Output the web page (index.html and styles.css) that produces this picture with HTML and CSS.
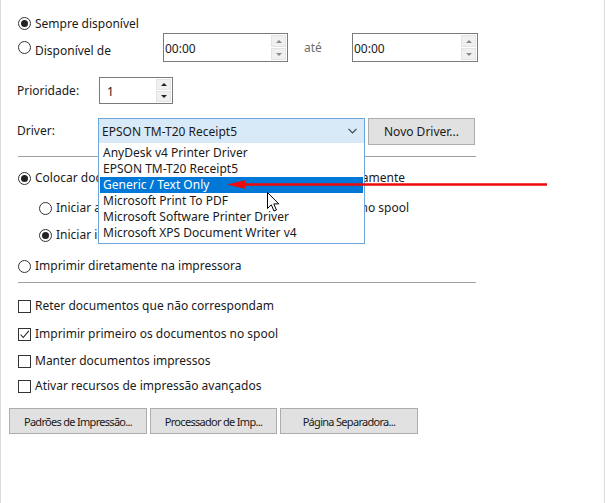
FILE: index.html
```html
<!DOCTYPE html>
<html lang="pt-BR">
<head>
<meta charset="utf-8">
<title>Avançado</title>
<link rel="stylesheet" href="styles.css">
</head>
<body>
<div class="dialog">
  <div class="content">
    <div class="row r1">
      <span class="radio on"></span><span class="lbl">Sempre disponível</span>
    </div>
    <div class="row r2">
      <div class="opt w-disp"><span class="radio"></span><span class="lbl low">Disponível de</span></div>
      <div class="spin time">
        <span class="val">00:00</span>
        <span class="arrows dis"><span class="up"></span><span class="down"></span></span>
      </div>
      <span class="ate">até</span>
      <div class="spin time t2">
        <span class="val">00:00</span>
        <span class="arrows dis"><span class="up"></span><span class="down"></span></span>
      </div>
    </div>
    <div class="row r3">
      <span class="lbl w-label">Prioridade:</span>
      <div class="spin prio">
        <span class="val num">1</span>
        <span class="arrows"><span class="up"></span><span class="down"></span></span>
      </div>
    </div>
    <div class="row r4">
      <span class="lbl w-driver">Driver:</span>
      <div class="combo">
        <span class="combo-val">EPSON TM-T20 Receipt5</span>
        <svg class="chev" width="9" height="6" viewBox="0 0 9 6"><polyline points="0.5,0.8 4.5,4.8 8.5,0.8" fill="none" stroke="#444" stroke-width="1.2"/></svg>
        <ul class="list">
          <li>AnyDesk v4 Printer Driver</li>
          <li>EPSON TM-T20 Receipt5</li>
          <li class="sel">Generic / Text Only</li>
          <li>Microsoft Print To PDF</li>
          <li>Microsoft Software Printer Driver</li>
          <li>Microsoft XPS Document Writer v4</li>
        </ul>
      </div>
      <button class="btn novo">Novo Driver...</button>
    </div>
    <div class="sep s1"></div>
    <div class="row rr r-spool">
      <span class="radio on"></span><span class="lbl">Colocar documentos no spool para se imprimir mais rapidamente</span>
    </div>
    <div class="row rr sub s-a">
      <span class="radio"></span><span class="lbl">Iniciar a impressão após a última página ser colocada no spool</span>
    </div>
    <div class="row rr sub s-b">
      <span class="radio on"></span><span class="lbl">Iniciar impressão imediatamente</span>
    </div>
    <div class="row rr r-direct">
      <span class="radio"></span><span class="lbl">Imprimir diretamente na impressora</span>
    </div>
    <div class="sep s2"></div>
    <div class="row rr c1"><span class="check"></span><span class="lbl">Reter documentos que não correspondam</span></div>
    <div class="row rr c2"><span class="check on"><svg width="11" height="11" viewBox="0 0 11 11"><polyline points="1.5,5.5 4.2,8.5 9.8,1.8" fill="none" stroke="#222" stroke-width="1.1"/></svg></span><span class="lbl">Imprimir primeiro os documentos no spool</span></div>
    <div class="row rr c3"><span class="check"></span><span class="lbl">Manter documentos impressos</span></div>
    <div class="row rr c4"><span class="check"></span><span class="lbl">Ativar recursos de impressão avançados</span></div>
    <div class="row buttons">
      <button class="btn b1">Padrões de Impressão...</button>
      <button class="btn b2">Processador de Imp...</button>
      <button class="btn b3">Página Separadora...</button>
    </div>
  </div>
  <svg class="red-arrow" width="322" height="12" viewBox="0 0 322 12">
    <line x1="16" y1="6.5" x2="320" y2="6.5" stroke="#ee0a0a" stroke-width="2.6"/>
    <polygon points="0,6.5 18,2.3 18,10.7" fill="#ee0a0a"/>
  </svg>
  <svg class="cursor" width="13" height="21" viewBox="0 0 13 21">
    <path d="M0.5,0.5 L0.5,16.5 L4.3,12.8 L7,19 L9.4,18 L6.8,11.9 L11.8,11.9 Z" fill="#fff" stroke="#000" stroke-width="1" stroke-linejoin="round"/>
  </svg>
</div>
</body>
</html>
```

FILE: styles.css
```css
* { box-sizing: border-box; }
html, body { margin: 0; padding: 0; background: #fff; }
body {
  font-family: "Noto Sans", "Open Sans", sans-serif;
  font-size: 12px;
  color: #1a1a1a;
}
.dialog {
  position: relative;
  width: 605px;
  height: 503px;
  border-left: 1px solid #dcdcdc;
  border-right: 1px solid #dcdcdc;
  overflow: hidden;
}
.content {
  display: flex;
  flex-direction: column;
  padding-left: 16px;
}
.row {
  display: flex;
  align-items: center;
  white-space: nowrap;
}
.lbl { line-height: 16px; }
.low { margin-top: 7px; }

.radio {
  width: 13px;
  height: 13px;
  border: 1px solid #333;
  border-radius: 50%;
  margin: 0 4px 0 1px;
  display: inline-flex;
  align-items: center;
  justify-content: center;
  flex: none;
  background: #fff;
}
.radio.on::after {
  content: "";
  width: 7px;
  height: 7px;
  border-radius: 50%;
  background: #222;
}
.check {
  width: 13px;
  height: 13px;
  border: 1px solid #333;
  margin: 0 4px 0 1px;
  flex: none;
  display: inline-flex;
  align-items: center;
  justify-content: center;
  background: #fff;
}

.r1 { margin-top: 14px; height: 19px; }
.r2 { height: 29px; }
.r3 { margin-top: 15px; height: 27px; }
.r4 { margin-top: 14px; height: 26px; }

.opt { display: flex; align-items: center; }
.w-disp { width: 146px; }
.w-label { width: 82px; }
.w-driver { width: 81px; }

.spin {
  display: flex;
  border: 1px solid #7a7a7a;
  background: #fff;
  height: 100%;
  align-items: stretch;
}
.spin .val {
  flex: 1;
  display: flex;
  align-items: center;
  padding-left: 1px;
  padding-top: 1px;
}
.spin .val.num { padding-left: 7px; }
.time { width: 125px; }
.t2 { width: 126px; }
.prio { width: 74px; }
.ate {
  width: 64px;
  padding-left: 16px;
  color: #6e6e6e;
}
.arrows {
  width: 16px;
  display: flex;
  flex-direction: column;
  gap: 1px;
  padding: 1px 1px 1px 0;
}
.arrows span {
  flex: 1;
  background: #f0f0f0;
  border: 1px solid #e3e3e3;
  display: flex;
  align-items: center;
  justify-content: center;
}
.arrows .up::after {
  content: "";
  border-left: 3px solid transparent;
  border-right: 3px solid transparent;
  border-bottom: 3px solid #222;
}
.arrows .down::after {
  content: "";
  border-left: 3px solid transparent;
  border-right: 3px solid transparent;
  border-top: 3px solid #222;
}
.arrows.dis .up::after { border-bottom-color: #8a8a8a; }
.arrows.dis .down::after { border-top-color: #8a8a8a; }

.combo {
  position: relative;
  width: 267px;
  height: 26px;
  border: 1px solid #6ea6dc;
  background: #d8e9f8;
  display: flex;
  align-items: center;
  padding-left: 3px;
}
.combo-val { flex: 1; }
.chev { margin-right: 7px; }
.list {
  position: absolute;
  left: -1px;
  top: 24px;
  width: 267px;
  margin: 0;
  padding: 2px 1px 2px;
  list-style: none;
  background: #fff;
  border: 1px solid #6ea6dc;
  border-top: none;
  z-index: 2;
}
.list li {
  height: 16px;
  line-height: 16px;
  padding-left: 3px;
  white-space: nowrap;
  overflow: hidden;
}
.list li.sel {
  background: #0078d7;
  color: #fff;
}

.btn {
  font: inherit;
  color: #1a1a1a;
  background: #e1e1e1;
  border: 1px solid #adadad;
  height: 27px;
  padding: 0;
  margin: 0;
}
.novo { width: 107px; margin-left: 3px; }

.sep {
  height: 1px;
  width: 458px;
  margin-left: 1px;
  background: #a0a0a0;
}
.s1 { margin-top: 12px; }
.s2 { margin-top: 6px; }

.rr { height: 20px; }
.sub { padding-left: 21px; }
.r-spool { margin-top: 11px; }
.s-a { margin-top: 10px; }
.s-b { margin-top: 7px; }
.r-direct { margin-top: 11px; }
.c1 { margin-top: 13px; }
.c2 { margin-top: 8px; }
.c3 { margin-top: 7px; }
.c4 { margin-top: 5px; }

.buttons {
  margin-top: 12px;
  margin-left: -8px;
  gap: 3px;
  height: 26px;
}
.buttons .btn {
  height: 26px;
  font-size: 11px;
  letter-spacing: -0.7px;
}
.b1 { width: 138px; }
.b2 { width: 127px; }
.b3 { width: 138px; }

.red-arrow {
  position: absolute;
  left: 226px;
  top: 178px;
  z-index: 5;
}
.cursor {
  position: absolute;
  left: 266px;
  top: 192px;
  z-index: 6;
}
```
